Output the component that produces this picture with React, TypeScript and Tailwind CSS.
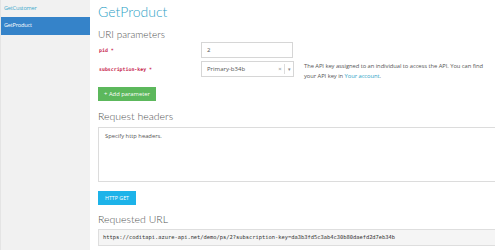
import React from "react";

export default function App() {
  const sans = { fontFamily: '"Open Sans", "Noto Sans", sans-serif' };
  const lato = { fontFamily: 'Lato, "Open Sans", sans-serif' };
  const mono = { fontFamily: '"DejaVu Sans Mono", monospace' };
  return (
    <div className="flex w-[495px] h-[250px] overflow-hidden bg-white" style={sans}>
      <div className="w-[90px] shrink-0 bg-[#f1f1f1] border-l border-[#e4e4e4] flex flex-col pt-[2px]">
        <div className="h-[15px] pl-[3px] text-[5.6px] leading-[12px] text-[#3fa9cc] tracking-[-0.2px]">GetCustomer</div>
        <div className="h-[18px] pl-[3px] bg-[#3583c9] text-white text-[5.6px] leading-[17px] tracking-[-0.2px]">GetProduct</div>
      </div>
      <div className="flex-1 pl-[8px] flex flex-col">
        <div className="text-[14px] leading-[16px] font-light text-[#2ea2c6] mt-[4px]" style={lato}>GetProduct</div>
        <div className="text-[10px] leading-[12px] font-light text-[#555] mt-[8px]" style={lato}>URI parameters</div>
        <div className="flex items-center mt-[2px] h-[16px]">
          <div className="w-[103px] shrink-0 pl-[1px] text-[4.9px] leading-[8px] font-bold text-[#c7254e]" style={mono}>pid *</div>
          <div className="w-[92px] h-[16px] border border-[#d6d6d6] bg-white pl-[5px] text-[6px] leading-[14px] text-[#555]">2</div>
        </div>
        <div className="flex items-start mt-[3px] h-[16px]">
          <div className="w-[103px] shrink-0 pl-[1px] h-[16px] flex items-center text-[4.9px] leading-[8px] font-bold text-[#c7254e]" style={mono}>subscription-key *</div>
          <div className="w-[93px] h-[16px] shrink-0 border border-[#d6d6d6] bg-white flex items-center text-[6px] text-[#555]">
            <span className="flex-1 pl-[5px] leading-[14px]">Primary-b34b</span>
            <span className="w-[8px] text-center text-[6px] text-[#888] leading-[14px]">×</span>
            <span className="w-px h-[10px] bg-[#ddd]"></span>
            <span className="w-[8px] text-center text-[5px] text-[#888] leading-[14px]">▾</span>
          </div>
          <div className="ml-[10px] text-[5.8px] leading-[10px] text-[#555] w-[192px] tracking-[-0.05px]">
            The API key assigned to an individual to access the API. You can find your API key in <span className="text-[#2ea2c6]">Your account</span>.
          </div>
        </div>
        <div className="mt-[10px] w-[58px] h-[14px] bg-[#5cb85c] text-white text-[5.8px] leading-[14px] text-center">+ Add parameter</div>
        <div className="text-[10.5px] leading-[12px] font-light text-[#555] mt-[9px]" style={lato}>Request headers</div>
        <div className="mt-[5px] h-[55px] border border-r-0 border-[#dcdcdc] bg-white pl-[6px] pt-[4px] text-[5.8px] leading-[9px] text-[#555]">Specify http headers.</div>
        <div className="mt-[9px] w-[38px] h-[14px] bg-[#1db3e9] text-white text-[5.3px] leading-[14px] text-center">HTTP GET</div>
        <div className="text-[10.5px] leading-[12px] font-light text-[#555] mt-[8px]" style={lato}>Requested URL</div>
        <div className="mt-[4px] h-[17px] border border-r-0 border-[#dedede] bg-[#f5f5f5] pl-[4px] text-[5.4px] leading-[15px] text-[#333] whitespace-nowrap" style={mono}>
          https://coditapi.azure-api.net/demo/ps/2?subscription-key=da3b3fd5c3ab4c30b80daefd2d7eb34b
        </div>
      </div>
    </div>
  );
}
